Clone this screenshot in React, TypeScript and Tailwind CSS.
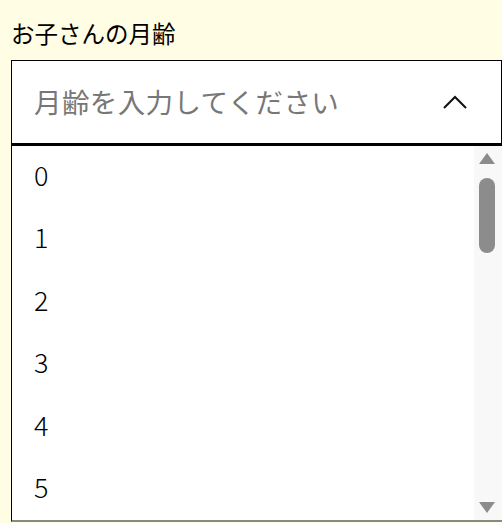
const months = [0, 1, 2, 3, 4, 5]

export default function App() {
  return (
    <div
      className="h-[523px] w-full overflow-hidden bg-[#fffde4] text-black"
      style={{ fontFamily: '"Noto Sans CJK JP", "Noto Sans", sans-serif' }}
    >
      <div className="pl-[11px] pt-[17px] text-[23.5px] leading-[32px]">お子さんの月齢</div>

      <div className="ml-[11px] mt-[11px] w-[491px]">
        <div className="flex h-[84px] items-center justify-between border border-black bg-white pl-[22px] pr-[34px]">
          <span className="text-[27.5px] leading-none tracking-[0.4px] text-[#777777]">月齢を入力してください</span>
          <svg width="24" height="14" viewBox="0 0 24 14" fill="none">
            <path d="M1 13 L12 2 L23 13" stroke="#111" strokeWidth="2" />
          </svg>
        </div>

        <div className="flex h-[378px] border-l border-t-2 border-b-2 border-black border-b-[#888888] bg-white">
          <ul className="flex-1">
            {months.map((m) => (
              <li key={m} className="flex h-[62.5px] items-center pb-[6px] pl-[22px] text-[27px] font-light leading-none">
                {m}
              </li>
            ))}
          </ul>
          <div className="flex w-[28px] flex-col items-center bg-[#f8f8f8] pr-[2px] pt-[7px] pb-[7px]">
            <svg width="16" height="11" viewBox="0 0 16 11">
              <path d="M8 0 L16 11 L0 11 Z" fill="#8c8c8c" />
            </svg>
            <div className="mt-[14px] h-[75px] w-[16px] rounded-full bg-[#8c8c8c]" />
            <div className="flex-1" />
            <svg width="16" height="11" viewBox="0 0 16 11">
              <path d="M0 0 L16 0 L8 11 Z" fill="#8c8c8c" />
            </svg>
          </div>
        </div>
      </div>
    </div>
  )
}
